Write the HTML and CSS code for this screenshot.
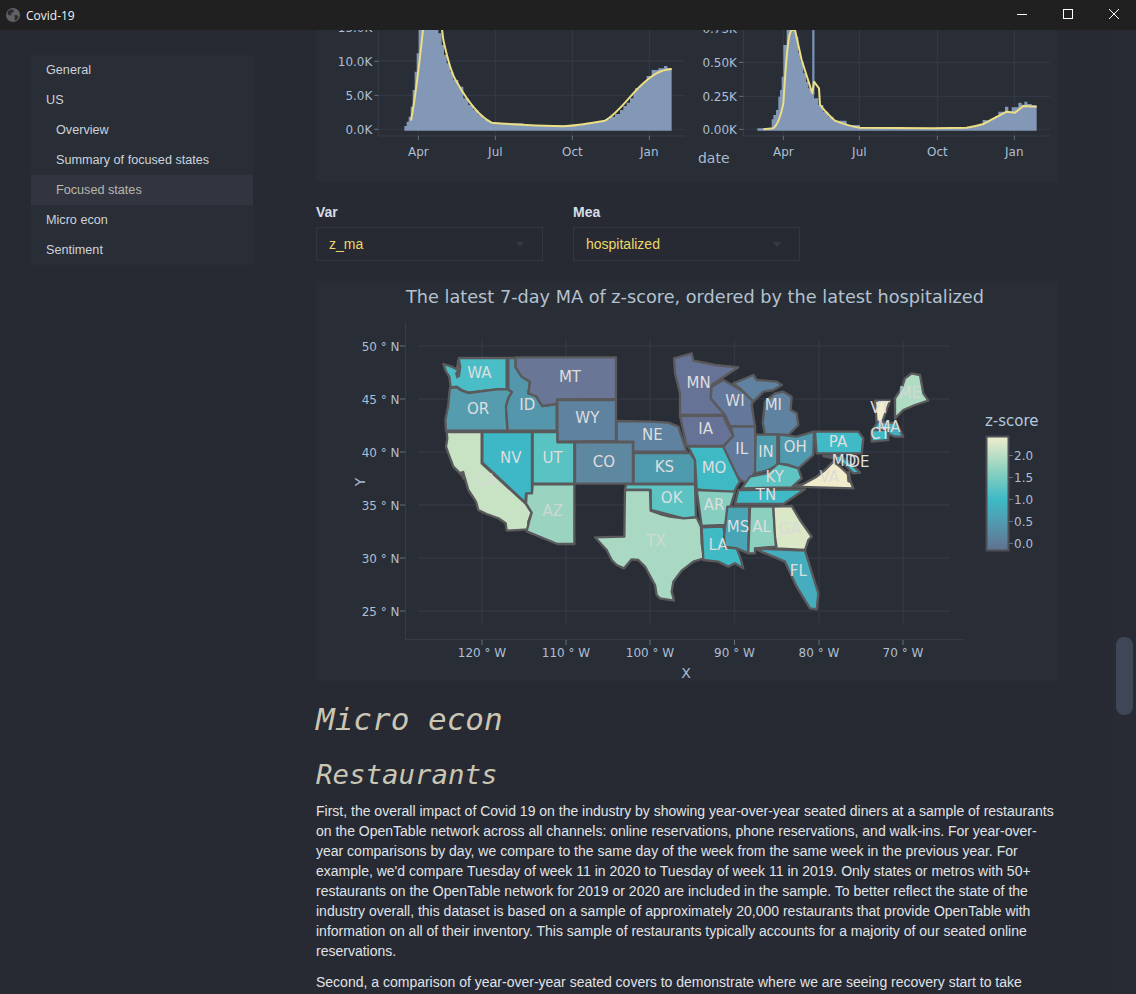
FILE: index.html
```html
<!DOCTYPE html>
<html lang="en">
<head>
<meta charset="utf-8">
<title>Covid-19</title>
<link rel="stylesheet" href="styles.css">
</head>
<body>
<div class="app">
  <header class="titlebar">
    <div class="title-left">
      <svg class="globe" viewBox="0 0 14 14" width="14" height="14"><circle cx="7" cy="7" r="7" fill="#5f6164"/><path d="M2 3 5 1.500 8 2 7 4.500 5 5 5.500 7 3.500 7.500 1.500 6ZM8 7.500 11 7 12.500 9 10 12.500 8.500 12 9 9.500Z" fill="#2a2b2d"/></svg>
      <span class="app-name">Covid-19</span>
    </div>
    <div class="win-controls">
      <svg class="win-btn" viewBox="0 0 46 30" width="46" height="30"><path d="M19 14.500H29" stroke="#fff" fill="none"/></svg>
      <svg class="win-btn" viewBox="0 0 46 30" width="46" height="30"><rect x="19.500" y="9.500" width="9" height="9" stroke="#fff" fill="none"/></svg>
      <svg class="win-btn" viewBox="0 0 46 30" width="46" height="30"><path d="M19 9 29 19M29 9 19 19" stroke="#fff" fill="none"/></svg>
    </div>
  </header>
  <div class="layout">
    <aside class="side">
      <nav class="nav">
        <a class="nav-item">General</a>
        <a class="nav-item">US</a>
        <a class="nav-item sub">Overview</a>
        <a class="nav-item sub">Summary of focused states</a>
        <a class="nav-item sub active">Focused states</a>
        <a class="nav-item">Micro econ</a>
        <a class="nav-item">Sentiment</a>
      </nav>
    </aside>
    <main class="main">
      <svg class="chart-top" viewBox="316 30 742 152" width="742" height="152">
        <g transform="translate(310 0) scale(.33333)">
          <g class="grid"><path d="M325 0V408M556 0V408M787 0V408M1018 0V408M205 183H1125M205 286H1125M205 388H1125"/></g>
          <path class="axis" d="M205 0V408H1125"/>
          <path class="tick" d="M193 81H205M193 184H205M193 286H205M193 388H205M325 408V420M556 408V420M787 408V420M1018 408V420"/>
          <path class="area" d="M283 392V378H290V365H296V350H302V320H308V270H314V215H320V160H326V0H385V100H395V135H402V165H410V190H420V215H430V240H445V260H460V295H475V315H490V330H505V345H520V358H535V366H550V370H640V376H760V378H800V372H830V368H860V364H885V358H900V350H915V342H930V330H940V318H950V308H960V295H970V280H975V265H990V255H1000V245H1010V228H1025V210H1045V205H1062V198H1072V204H1085V392Z"/>
          <path class="line" d="M303 362C315 300 325 220 340 80L345 0M385 0 400 120C410 165 425 225 440 245 465 290 500 345 545 368 590 372 680 378 760 379 800 376 850 368 885 362 925 340 960 285 1000 250 1030 222 1050 210 1085 207"/>
          <g class="tick-labels end">
            <text x="187" y="96">15.0K</text>
            <text x="187" y="199">10.0K</text>
            <text x="187" y="301">5.0K</text>
            <text x="187" y="403">0.0K</text>
          </g>
          <g class="tick-labels mid">
            <text x="325" y="467">Apr</text>
            <text x="556" y="467">Jul</text>
            <text x="787" y="467">Oct</text>
            <text x="1018" y="467">Jan</text>
          </g>
        </g>
        <g transform="translate(690 0) scale(.33333)">
          <g class="grid"><path d="M280 0V408M508 0V408M742 0V408M973 0V408M160 187H1080M160 289H1080M160 388H1080"/></g>
          <path class="axis" d="M160 0V408H1080"/>
          <path class="tick" d="M147 85H160M147 187H160M147 289H160M147 388H160M280 408V420M508 408V420M742 408V420M973 408V420"/>
          <path class="area" d="M202 392V385H245V358H250V345H258V330H265V290H270V270H275V230H280V135H290V0H318V110H325V160H332V185H340V220H348V245H355V265H363V282H372V295H385V315H400V335H415V350H430V362H470V375H510V384H740V383H830V380H860V375H878V360H890V362H905V355H915V348H925V335H945V320H955V335H965V322H985V308H995V314H1003V305H1012V312H1025V316H1040V392Z"/>
          <path class="spike" d="M370 0V285"/>
          <path class="line" d="M220 388 250 385C262 375 272 350 280 310 285 240 290 130 300 100L305 90H315L335 180 367 280 372 245 387 265 390 315C410 340 420 350 435 362 460 372 480 380 510 383L730 385 830 383C850 380 870 375 880 372L950 335 975 338 1000 318 1040 320"/>
          <g class="tick-labels end">
            <text x="141" y="100">0.75K</text>
            <text x="141" y="200">0.50K</text>
            <text x="141" y="302">0.25K</text>
            <text x="141" y="403">0.00K</text>
          </g>
          <g class="tick-labels mid">
            <text x="280" y="467">Apr</text>
            <text x="508" y="467">Jul</text>
            <text x="742" y="467">Oct</text>
            <text x="973" y="467">Jan</text>
          </g>
          <text class="axis-title" x="24" y="490">date</text>
        </g>
      </svg>

      <div class="filters">
        <div class="field">
          <label class="field-label">Var</label>
          <div class="select"><span>z_ma</span><i class="caret"></i></div>
        </div>
        <div class="field">
          <label class="field-label">Mea</label>
          <div class="select"><span>hospitalized</span><i class="caret"></i></div>
        </div>
      </div>

      <svg class="map-card" viewBox="316 281 742 400" width="742" height="400">
        <text class="map-title" x="695" y="303">The latest 7-day MA of z-score, ordered by the latest hospitalized</text>
        <path class="grid" d="M418 346H950M418 399H950M418 452H950M418 505H950M418 558H950M418 611H950M482 340V623M566 340V623M650 340V623M734.500 340V623M819 340V623M903 340V623"/>
        <path class="axis" d="M405.500 322V639.500H963"/>
        <path class="tick" d="M400 346H405M400 399H405M400 452H405M400 505H405M400 558H405M400 611H405M482 640V645M566 640V645M650 640V645M734.500 640V645M819 640V645M903 640V645"/>

        <g class="states" transform="translate(340 330) scale(.33333)">
          <polygon fill="#4bbdc6" points="357,84 500,84 500,178 470,178 430,183 385,188 365,180 350,170 332,172 328,140 318,125 310,102 335,110 350,118"/>
          <polygon fill="#549cae" points="330,174 350,172 365,182 385,189 430,183 470,178 503,178 516,186 505,205 498,230 502,302 318,302 316,270 325,225 328,190"/>
          <polygon fill="#c8e3c4" points="320,306 425,306 425,400 558,522 575,548 565,575 565,598 500,602 497,580 475,565 440,552 415,540 408,515 385,480 375,445 360,430 340,410 325,370 318,350 322,325"/>
          <polygon fill="#3eb8c6" points="427,306 576,306 576,490 558,492 556,518 427,398"/>
          <polygon fill="#5497ac" points="505,84 527,84 527,112 545,140 570,155 565,190 585,195 607,228 650,222 650,302 503,302 498,230 505,205 516,186 505,178"/>
          <polygon fill="#6a7695" points="527,82 828,82 828,207 652,208 650,222 607,228 590,200 565,190 570,155 545,140 535,125 527,112"/>
          <polygon fill="#5f82a0" points="652,210 828,210 828,333 652,335"/>
          <polygon fill="#59c2c3" points="578,306 652,306 652,337 703,337 703,461 578,461"/>
          <polygon fill="#9ad4c1" points="578,463 703,463 703,642 652,642 560,604 567,575 575,548 558,520 560,490 576,490"/>
          <polygon fill="#5e87a0" points="705,337 879,337 879,461 705,461"/>
          <path class="sound" d="M350 90 360 88 364 110 360 140 350 146 345 130 355 115Z"/>
          <path class="sound" d="M360 425 372 422 378 445 368 450Z"/>
        </g>
        <g class="states" transform="translate(640 330) scale(.33333)">
          <polygon fill="#5f82a0" points="-70,273 30,275 85,278 115,290 125,320 140,365 -20,365 -20,335 -70,335"/>
          <polygon fill="#4f9bae" points="-19,369 150,369 165,390 165,461 -19,461"/>
          <polygon fill="#5cc3c3" points="-42,463 165,463 168,562 130,565 90,555 32,540 32,480 -45,480"/>
          <polygon fill="#a9d9c3" points="-45,480 30,480 32,542 60,552 90,560 130,565 170,562 183,590 185,640 192,685 160,695 125,722 100,755 95,785 102,812 60,805 50,795 45,765 15,710 -5,690 -25,688 -48,715 -70,705 -85,690 -100,660 -135,622 -47,620"/>
          <polygon fill="#667396" points="102,85 155,70 160,92 225,105 295,112 245,145 215,165 212,205 250,250 250,255 120,255 120,190 105,130"/>
          <polygon fill="#63789a" points="215,170 250,150 285,170 310,185 345,195 335,225 345,290 270,288 255,255 212,205"/>
          <polygon fill="#5f82a0" points="280,160 340,135 350,150 410,155 425,165 400,180 370,185 340,215 300,175"/>
          <polygon fill="#5f82a0" points="405,190 430,185 455,200 452,240 470,250 475,285 445,315 375,312 368,280 375,215"/>
          <polygon fill="#667396" points="120,258 250,257 265,290 280,318 250,348 140,348"/>
          <polygon fill="#627b9c" points="272,290 345,290 348,420 325,460 300,450 250,375 250,350 280,318"/>
          <polygon fill="#4f9bae" points="347,314 412,314 412,405 385,420 345,430"/>
          <polygon fill="#5099ae" points="417,314 470,320 522,305 520,375 475,415 440,403 417,405"/>
          <polygon fill="#3fbac6" points="525,305 655,305 670,325 665,370 530,370"/>
          <polygon fill="#5dc4c3" points="305,475 330,440 380,430 415,400 440,405 475,415 485,445 455,472"/>
          <polygon fill="#3fb9c6" points="295,480 495,478 430,522 285,522"/>
          <polygon fill="#3fbac5" points="145,350 250,350 300,455 290,470 280,490 170,478 165,390"/>
          <polygon fill="#86cfc0" points="170,480 285,485 255,585 185,588"/>
          <polygon fill="#40bbc6" points="185,592 250,590 258,630 252,652 290,655 300,680 310,715 285,700 265,710 235,695 190,690"/>
          <polygon fill="#49a4b5" points="262,530 328,530 325,670 290,655 255,650 252,620"/>
          <polygon fill="#8cd1c0" points="330,530 400,530 408,650 345,655 345,670 325,670"/>
          <polygon fill="#dbe8c8" points="400,530 455,528 480,570 515,620 505,630 495,660 410,655 405,620"/>
          <polygon fill="#45adbd" points="345,656 495,662 535,790 530,838 510,835 470,770 435,695 400,680 370,668"/>
          <polygon fill="#3fb9c6" points="550,378 600,376 632,400 660,428 640,430 615,405 580,385"/>
          <polygon fill="#f0eccb" points="460,470 490,462 530,440 555,420 580,395 600,410 622,430 640,475"/>
          <polygon fill="#b1dcc4" points="795,145 815,130 840,135 850,190 865,212 825,225 790,240 765,265 765,205 785,175"/>
          <polygon fill="#f2edcc" points="705,212 750,212 725,280 710,280"/>
          <polygon fill="#45adbd" points="715,275 770,280 790,320 765,320 700,295"/>
          <polygon fill="#3fbac6" points="695,300 745,300 745,330 695,335"/>
          <path class="sound" d="M620 425 630 422 635 462 622 455Z"/>
        </g>

        <g class="state-labels" transform="translate(340 330) scale(.33333)">
          <text x="418" y="128">WA</text><text x="414" y="236">OR</text><text x="562" y="224">ID</text>
          <text x="690" y="140">MT</text><text x="742" y="265">WY</text><text x="937" y="314">NE</text>
          <text x="792" y="395">CO</text><text x="638" y="383">UT</text><text x="512" y="383">NV</text>
          <text class="faint" x="437" y="450">CA</text><text class="faint" x="638" y="542">AZ</text>
        </g>
        <g class="state-labels" transform="translate(640 330) scale(.33333)">
          <text x="73" y="410">KS</text><text x="95" y="503">OK</text><text class="faint" x="48" y="632">TX</text>
          <text x="176" y="160">MN</text><text x="285" y="214">WI</text><text x="400" y="224">MI</text>
          <text x="197" y="296">IA</text><text x="305" y="358">IL</text><text x="378" y="365">IN</text>
          <text x="466" y="352">OH</text><text x="594" y="336">PA</text><text x="404" y="440">KY</text>
          <text x="222" y="413">MO</text><text x="222" y="524">AR</text><text x="378" y="494">TN</text>
          <text x="294" y="592">MS</text><text x="365" y="590">AL</text><text x="234" y="645">LA</text>
          <text class="faint" x="450" y="597">GA</text><text x="475" y="722">FL</text><text class="faint" x="568" y="440">VA</text>
          <text x="612" y="392">MD</text><text x="657" y="395">DE</text><text x="720" y="234">VT</text>
          <text class="faint" x="810" y="190">ME</text><text x="747" y="292">MA</text><text x="720" y="312">CT</text>
        </g>

        <g class="tick-labels2 end">
          <text x="399.500" y="351">50 ° N</text><text x="399.500" y="404">45 ° N</text><text x="399.500" y="457">40 ° N</text>
          <text x="399.500" y="510">35 ° N</text><text x="399.500" y="563">30 ° N</text><text x="399.500" y="616">25 ° N</text>
        </g>
        <g class="tick-labels2 mid">
          <text x="482" y="657">120 ° W</text><text x="566" y="657">110 ° W</text><text x="650" y="657">100 ° W</text>
          <text x="734.500" y="657">90 ° W</text><text x="819" y="657">80 ° W</text><text x="903" y="657">70 ° W</text>
        </g>
        <text class="axis-title2" transform="translate(365 482) rotate(-90)">Y</text>
        <text class="axis-title2" x="686" y="678">X</text>

        <defs>
          <linearGradient id="cb" x1="0" y1="1" x2="0" y2="0">
            <stop offset="0" stop-color="#62708e"/>
            <stop offset=".2" stop-color="#5593aa"/>
            <stop offset=".45" stop-color="#3ebac6"/>
            <stop offset=".7" stop-color="#8dd1bf"/>
            <stop offset="1" stop-color="#f0edcc"/>
          </linearGradient>
        </defs>
        <text class="cb-title" x="985" y="426">z-score</text>
        <rect class="cb" x="986.500" y="436.500" width="22" height="114" fill="url(#cb)"/>
        <path class="tick" d="M1009 543.500H1013M1009 521.500H1013M1009 499.500H1013M1009 477.500H1013M1009 455.500H1013"/>
        <g class="tick-labels2">
          <text x="1014" y="548">0.0</text><text x="1014" y="526">0.5</text><text x="1014" y="504">1.0</text>
          <text x="1014" y="482">1.5</text><text x="1014" y="460">2.0</text>
        </g>
      </svg>

      <h1 class="h1">Micro econ</h1>
      <h2 class="h2">Restaurants</h2>
      <p class="para">First, the overall impact of Covid 19 on the industry by showing year-over-year seated diners at a sample of restaurants on the OpenTable network across all channels: online reservations, phone reservations, and walk-ins. For year-over-year comparisons by day, we compare to the same day of the week from the same week in the previous year. For example, we'd compare Tuesday of week 11 in 2020 to Tuesday of week 11 in 2019. Only states or metros with 50+ restaurants on the OpenTable network for 2019 or 2020 are included in the sample. To better reflect the state of the industry overall, this dataset is based on a sample of approximately 20,000 restaurants that provide OpenTable with information on all of their inventory. This sample of restaurants typically accounts for a majority of our seated online reservations.</p>
      <p class="para">Second, a comparison of year-over-year seated covers to demonstrate where we are seeing recovery start to take</p>
    </main>
    <div class="scrollbar"><div class="thumb"></div></div>
  </div>
</div>
</body>
</html>
```
FILE: styles.css
```css
* { box-sizing: border-box; }
html, body { margin: 0; padding: 0; height: 994px; overflow: hidden; background: #272a32; }
.app { width: 1136px; height: 994px; display: flex; flex-direction: column; font-family: "Liberation Sans", Arial, sans-serif; color: #d6d9df; overflow: hidden; }

.titlebar { flex: 0 0 30px; height: 30px; background: #202020; display: flex; align-items: center; justify-content: space-between; }
.title-left { display: flex; align-items: center; gap: 6px; padding-left: 6px; }
.globe { display: block; }
.app-name { font: 12px "Open Sans", "Liberation Sans", sans-serif; color: #f2f2f2; }
.win-controls { display: flex; }
.win-btn { display: block; }

.layout { flex: 1; display: flex; position: relative; min-height: 0; overflow: hidden; }
.side { flex: 0 0 316px; padding: 25px 63px 0 31px; }
.nav { background: #292d36; display: flex; flex-direction: column; }
.nav-item { display: flex; align-items: center; height: 30px; padding: 0 0 1px 15px; font-size: 12.650px; color: #ced2da; }
.nav-item.sub { padding-left: 25px; }
.nav-item.active { background: #32343f; color: #b8b8ac; }

.main { flex: 0 0 742px; width: 742px; }
.chart-top { display: block; background: #292d36; }
.map-card { display: block; background: #292d36; margin-top: 20px; }

.filters { display: flex; gap: 30px; padding-top: 23px; }
.field { width: 227px; }
.field-label { display: block; height: 22px; font-size: 14px; font-weight: 700; line-height: 14px; color: #d6deea; }
.select { height: 34px; border: 1px solid #333743; padding: 0 12px; display: flex; align-items: center; justify-content: space-between; font-size: 14px; color: #ecd769; }
.caret { width: 0; height: 0; border: 4px solid transparent; border-top: 5px solid #373a42; border-bottom: 0; margin-right: 6px; }

.grid { fill: none; stroke: #333743; stroke-width: 2; }
.chart-top .grid path { stroke-width: 4; }
.map-card > .grid { stroke-width: 1.500; }
.axis { fill: none; stroke: #383c49; stroke-width: 1; }
.chart-top .axis { stroke-width: 3; }
.tick { fill: none; stroke: #65707f; stroke-width: 1; }
.chart-top .tick { stroke-width: 3; }
.area { fill: #8298b6; }
.spike { fill: none; stroke: #7890b0; stroke-width: 7; }
.line { fill: none; stroke: #ebde85; stroke-width: 6; stroke-linejoin: round; }

.tick-labels text { font: 36px "DejaVu Sans", sans-serif; fill: #adbfd4; }
.tick-labels.end text { text-anchor: end; }
.tick-labels.mid text { text-anchor: middle; }
.tick-labels2 text { font: 12px "DejaVu Sans", sans-serif; fill: #adbfd4; }
.tick-labels2.end text { text-anchor: end; }
.tick-labels2.mid text { text-anchor: middle; }
.axis-title { font: 42px "DejaVu Sans", sans-serif; fill: #a9bbcf; }
.axis-title2 { font: 14px "DejaVu Sans", sans-serif; fill: #a9bbcf; text-anchor: middle; }
.map-title { font: 17.700px "DejaVu Sans", sans-serif; fill: #b4c1cf; text-anchor: middle; }
.cb-title { font: 15px "DejaVu Sans", sans-serif; fill: #b4c7dc; }
.cb { stroke: #4c4f56; stroke-width: 2; }

.states polygon { stroke: #5a5a5c; stroke-width: 7; stroke-linejoin: round; }
.sound { fill: #5a5a5c; }
.state-labels text { font: 45px "DejaVu Sans", sans-serif; fill: #dedede; text-anchor: middle; dominant-baseline: central; }
.state-labels text.faint { fill: #d9d9d9; opacity: .8; }

.h1, .h2 { font-family: "DejaVu Sans Mono", monospace; font-style: italic; font-weight: 400; color: #c9c6b4; margin: 0; }
.h1 { font-size: 31px; line-height: 38px; margin-top: 19px; }
.h2 { font-size: 27.400px; line-height: 34px; margin-top: 20px; }
.para { font-size: 14px; line-height: 20px; color: #e0e3e8; margin: 11px 0 0; }
.h2 + .para { margin-top: 9px; }

.scrollbar { position: absolute; right: 0; top: 0; bottom: 0; width: 23px; background: #282b34; }
.thumb { position: absolute; left: 3px; top: 607px; width: 17px; height: 78px; border-radius: 8px; background: #3f4656; }
```
